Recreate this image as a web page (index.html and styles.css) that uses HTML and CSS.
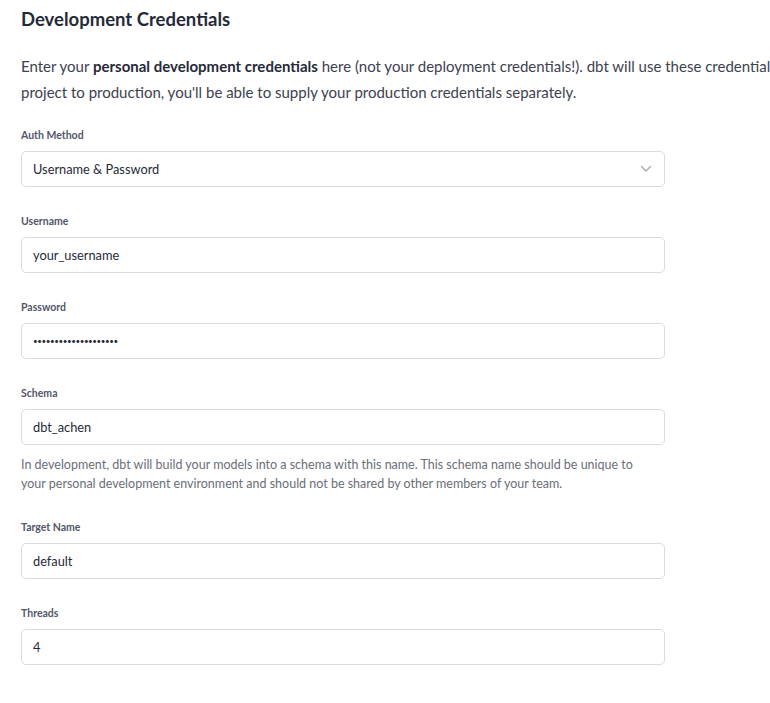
FILE: index.html
```html
<!DOCTYPE html>
<html lang="en">

<head>
    <meta charset="UTF-8">
    <meta name="viewport" content="width=device-width, initial-scale=1.0">
    <title>Development Credentials</title>
    <link rel="stylesheet" href="styles.css">
</head>

<body>
    <div class="page">
        <h2 class="title">Development Credentials</h2>
        <p class="intro">Enter your <b>personal development credentials</b> here (not your deployment credentials!). dbt will use these credentials to connect to your database on your behalf. When you're ready to deploy your dbt project to production, you'll be able to supply your production credentials separately.</p>

        <form class="form">
            <div class="field">
                <label class="label" for="auth">Auth Method</label>
                <div class="select-wrap">
                    <select class="input select" id="auth">
                        <option>Username &amp; Password</option>
                        <option>Key Pair</option>
                    </select>
                    <svg class="chevron" width="12" height="8" viewBox="0 0 12 8">
                        <path d="M1.5 1.5 L6 6 L10.5 1.5" fill="none" stroke="#a5a8ae" stroke-width="1.4" stroke-linecap="round" stroke-linejoin="round" />
                    </svg>
                </div>
            </div>

            <div class="field">
                <label class="label" for="username">Username</label>
                <input class="input" id="username" type="text" value="your_username">
            </div>

            <div class="field">
                <label class="label" for="password">Password</label>
                <input class="input password" id="password" type="password" value="xxxxxxxxxxxxxxxxxxxx">
            </div>

            <div class="field">
                <label class="label" for="schema">Schema</label>
                <input class="input" id="schema" type="text" value="dbt_achen">
                <p class="help">In development, dbt will build your models into a schema with this name. This schema name should be unique to your personal development environment and should not be shared by other members of your team.</p>
            </div>

            <div class="field">
                <label class="label" for="target">Target Name</label>
                <input class="input" id="target" type="text" value="default">
            </div>

            <div class="field">
                <label class="label" for="threads">Threads</label>
                <input class="input" id="threads" type="text" value="4">
            </div>
        </form>
    </div>
</body>

</html>
```

FILE: styles.css
```css
* {
    margin: 0;
    padding: 0;
    box-sizing: border-box;
}

body {
    background: #fff;
    font-family: "Lato", "Open Sans", sans-serif;
    color: #262a38;
    overflow: hidden;
}

.page {
    width: 1340px;
    padding: 9px 21px 40px;
}

.title {
    font-size: 18.5px;
    font-weight: 700;
    line-height: 20px;
    color: #262a38;
}

.intro {
    margin-top: 24px;
    font-size: 15px;
    line-height: 26px;
    color: #3d4150;
}

.intro b {
    color: #262a38;
}

.form {
    display: flex;
    flex-direction: column;
    gap: 27px;
    margin-top: 23px;
    width: 644px;
}

.field {
    display: flex;
    flex-direction: column;
}

.label {
    font-size: 10.5px;
    font-weight: 700;
    line-height: 14px;
    color: #52566a;
    margin-bottom: 9px;
}

.input {
    width: 100%;
    height: 36px;
    border: 1px solid #d9dbdf;
    border-radius: 5px;
    background: #fff;
    padding: 0 11px;
    font-family: inherit;
    font-size: 12.8px;
    color: #262a38;
    outline: none;
}

.password {
    font-size: 8px;
    letter-spacing: -0.4px;
}

.select-wrap {
    position: relative;
}

.select {
    appearance: none;
    -webkit-appearance: none;
}

.chevron {
    position: absolute;
    right: 13px;
    top: 14px;
    pointer-events: none;
}

.help {
    margin-top: 10px;
    padding-right: 16px;
    font-size: 12.5px;
    line-height: 19px;
    color: #6a6e78;
}
```
